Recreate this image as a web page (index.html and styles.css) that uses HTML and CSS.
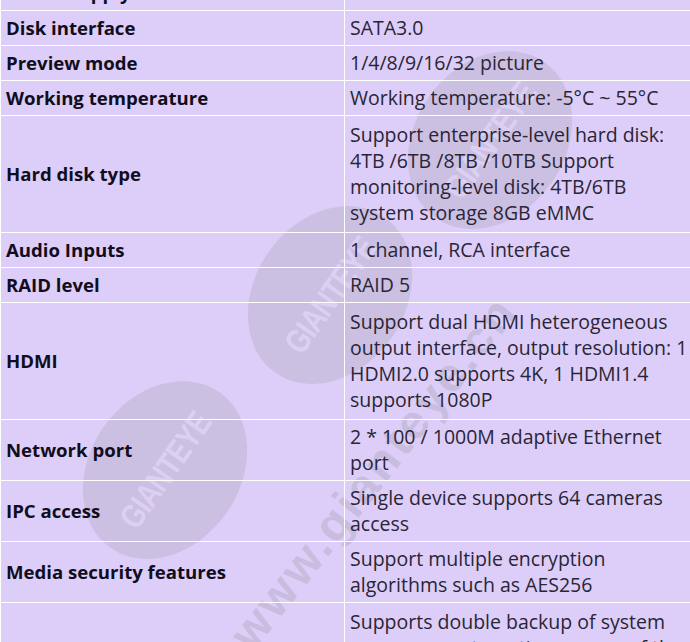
FILE: index.html
```html
<!DOCTYPE html>
<html lang="en">
<head>
<meta charset="utf-8">
<title>Specifications</title>
<link rel="stylesheet" href="styles.css">
</head>
<body>
<div class="sheet">
  <div class="watermarks" aria-hidden="true">
    <div class="mark mark-a"><span>GIANTEYE</span></div>
    <div class="mark mark-b"><span>GIANTEYE</span></div>
    <div class="mark mark-c"><span>GIANTEYE</span></div>
    <div class="url url-a">www.gianteye.cn</div>
  </div>
  <table class="spec">
    <colgroup><col class="c-label"><col class="c-value"></colgroup>
    <tbody>
      <tr><th>Power supply</th><td>DC12V</td></tr>
      <tr><th>Disk interface</th><td>SATA3.0</td></tr>
      <tr><th>Preview mode</th><td>1/4/8/9/16/32 picture</td></tr>
      <tr><th>Working temperature</th><td>Working temperature: -5°C ~ 55°C</td></tr>
      <tr class="tall"><th>Hard disk type</th><td>Support enterprise-level hard disk: 4TB /6TB /8TB /10TB Support monitoring-level disk: 4TB/6TB system storage 8GB eMMC</td></tr>
      <tr><th>Audio Inputs</th><td>1 channel, RCA interface</td></tr>
      <tr><th>RAID level</th><td>RAID 5</td></tr>
      <tr class="tall"><th>HDMI</th><td>Support dual HDMI heterogeneous output interface, output resolution: 1 HDMI2.0 supports 4K, 1 HDMI1.4 supports 1080P</td></tr>
      <tr><th>Network port</th><td>2 * 100 / 1000M adaptive Ethernet port</td></tr>
      <tr><th>IPC access</th><td>Single device supports 64 cameras access</td></tr>
      <tr><th>Media security features</th><td>Support multiple encryption algorithms such as AES256</td></tr>
      <tr class="tall"><th>System backup</th><td>Supports double backup of system programs, automatic recovery of the system after damage, ensuring stable operation</td></tr>
    </tbody>
  </table>
</div>
</body>
</html>
```
FILE: styles.css
```css
html, body {
  margin: 0;
  padding: 0;
  background: #dccef8;
  overflow: hidden;
}

.sheet {
  position: relative;
  width: 696px;
  margin-top: -25px;
  background: #dccef8;
}

.watermarks {
  position: absolute;
  inset: 0;
  z-index: 0;
  overflow: hidden;
}

.mark {
  position: absolute;
  width: 190px;
  height: 150px;
  border-radius: 50%;
  background: #cbbfe2;
  transform: rotate(-55deg);
  display: flex;
  align-items: center;
  justify-content: center;
}

.mark span {
  font-family: "Liberation Sans", Arial, sans-serif;
  font-weight: 700;
  font-size: 34px;
  letter-spacing: -1px;
  color: #dcd0f2;
  transform: scaleX(0.8);
}

.mark-a { left: 395px; top: 90px; }
.mark-b { left: 235px; top: 245px; }
.mark-c { left: 70px; top: 420px; }

.url {
  position: absolute;
  font-family: "Liberation Sans", Arial, sans-serif;
  font-weight: 700;
  font-size: 48px;
  letter-spacing: 3px;
  color: #c9bddf;
  white-space: nowrap;
  transform-origin: left center;
  transform: rotate(-52deg);
}

.url-a { left: 240px; top: 640px; }

.spec {
  position: relative;
  z-index: 1;
  width: 696px;
  border-collapse: collapse;
  font-family: "Open Sans", "Noto Sans", sans-serif;
  font-size: 19.5px;
  line-height: 26px;
  color: #1f1a2a;
  table-layout: fixed;
}

.c-label { width: 344px; }

.spec th,
.spec td {
  border: 1px solid #ffffff;
  padding: 4px 5px;
  text-align: left;
  vertical-align: middle;
}

.spec th {
  font-size: 18.6px;
  font-weight: 700;
  color: #110d1c;
}

.spec td {
  font-weight: 400;
  color: #2a2535;
}

.spec .tall th,
.spec .tall td {
  padding-top: 6px;
  padding-bottom: 6px;
}
```
